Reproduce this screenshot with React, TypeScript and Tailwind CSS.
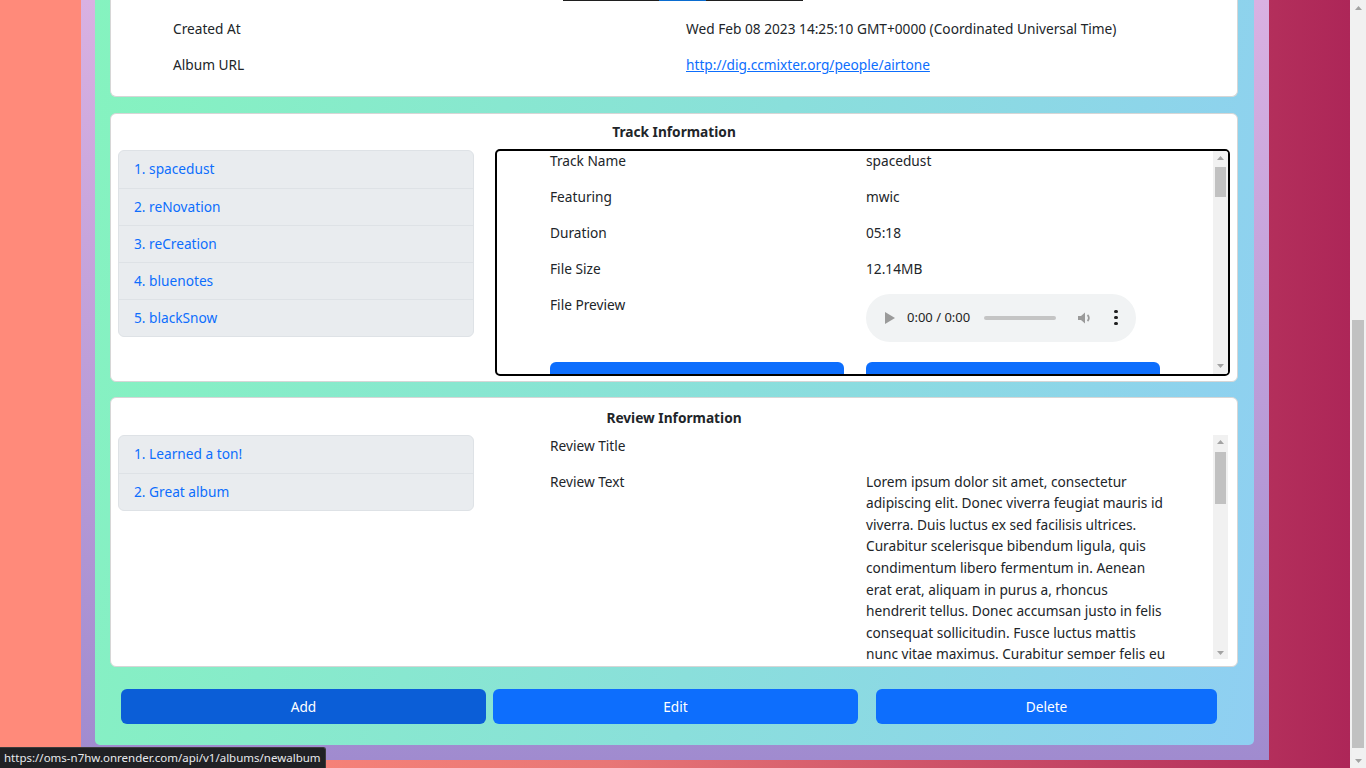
import React from "react";

const tracks = ["spacedust", "reNovation", "reCreation", "bluenotes", "blackSnow"];
const reviews = ["Learned a ton!", "Great album"];

const trackRows = [
  { label: "Track Name", value: "spacedust" },
  { label: "Featuring", value: "mwic" },
  { label: "Duration", value: "05:18" },
  { label: "File Size", value: "12.14MB" },
];

const lorem = [
  "Lorem ipsum dolor sit amet, consectetur",
  "adipiscing elit. Donec viverra feugiat mauris id",
  "viverra. Duis luctus ex sed facilisis ultrices.",
  "Curabitur scelerisque bibendum ligula, quis",
  "condimentum libero fermentum in. Aenean",
  "erat erat, aliquam in purus a, rhoncus",
  "hendrerit tellus. Donec accumsan justo in felis",
  "consequat sollicitudin. Fusce luctus mattis",
  "nunc vitae maximus. Curabitur semper felis eu",
];

function Arrow({ up }: { up?: boolean }) {
  return (
    <div className="flex h-[15px] w-full shrink-0 items-center justify-center">
      <svg width="7" height="4" viewBox="0 0 7 4">
        {up ? <path d="M0 4 L3.5 0 L7 4 Z" fill="#a3a3a3" /> : <path d="M0 0 L3.5 4 L7 0 Z" fill="#a3a3a3" />}
      </svg>
    </div>
  );
}

function Scrollbar({ thumbTop, thumbHeight }: { thumbTop: number; thumbHeight: number }) {
  return (
    <div className="flex h-full w-[15px] shrink-0 flex-col bg-[#f1f1f1]">
      <Arrow up />
      <div className="flex-1 px-[2px]">
        <div className="w-full bg-[#c1c1c1]" style={{ marginTop: thumbTop, height: thumbHeight }} />
      </div>
      <Arrow />
    </div>
  );
}

function ListGroup({ items }: { items: string[] }) {
  return (
    <div className="flex w-[356px] flex-col overflow-hidden rounded-[6px] border border-[#dee2e6] bg-[#e9ecef]">
      {items.map((t, i) => (
        <div
          key={t}
          className={
            "flex h-[37px] items-center px-[15px] text-[#0d6efd] " + (i > 0 ? "border-t border-[#dee2e6]" : "")
          }
        >
          {i + 1}. {t}
        </div>
      ))}
    </div>
  );
}

function AudioPlayer() {
  return (
    <div className="flex h-[48px] w-[270px] items-center whitespace-nowrap rounded-full bg-[#f1f3f4] pl-[17px] pr-[18px]">
      <svg width="14" height="16" viewBox="0 0 14 16">
        <path d="M2 2 L12 8 L2 14 Z" fill="#9a9a9a" />
      </svg>
      <span className="ml-[10px] text-[13px] text-[#1f1f1f]">0:00 / 0:00</span>
      <div className="ml-[14px] h-[4px] w-[72px] rounded-full bg-[#c4c4c4]" />
      <svg className="ml-[20px]" width="18" height="18" viewBox="0 0 18 18">
        <path d="M2 7 H5 L9 3.5 V14.5 L5 11 H2 Z" fill="#9a9a9a" />
        <path d="M11.5 6 A4 4 0 0 1 11.5 12" stroke="#9a9a9a" strokeWidth="1.8" fill="none" />
      </svg>
      <div className="ml-[20px] flex flex-col items-center gap-[2.5px]">
        <div className="h-[3.5px] w-[3.5px] rounded-full bg-[#1f1f1f]" />
        <div className="h-[3.5px] w-[3.5px] rounded-full bg-[#1f1f1f]" />
        <div className="h-[3.5px] w-[3.5px] rounded-full bg-[#1f1f1f]" />
      </div>
    </div>
  );
}

function TrackCard() {
  return (
    <div className="mt-[16px] flex h-[269px] flex-col rounded-[6px] border border-[#d6d6d6] bg-white px-[7px] pt-[7px]">
      <h2 className="text-center font-bold leading-[21.6px]">Track Information</h2>
      <div className="mt-[6px] flex gap-[21px]">
        <div className="mt-[1px]">
          <ListGroup items={tracks} />
        </div>
        <div className="flex h-[227px] w-[736px] overflow-hidden rounded-[5px] border-2 border-black">
          <div className="flex-1 overflow-hidden">
            <div className="mx-auto -mt-[1px] w-[610px]">
              {trackRows.map((r) => (
                <div key={r.label} className="grid h-[36px] grid-cols-[294px_294px] gap-x-[22px]">
                  <span>{r.label}</span>
                  <span>{r.value}</span>
                </div>
              ))}
              <div className="grid grid-cols-[294px_294px] gap-x-[22px]">
                <span>File Preview</span>
                <AudioPlayer />
              </div>
              <div className="mt-[20px] grid grid-cols-[294px_294px] gap-x-[22px]">
                <div className="h-[38px] rounded-[6px] bg-[#0d6efd]" />
                <div className="h-[38px] rounded-[6px] bg-[#0d6efd]" />
              </div>
            </div>
          </div>
          <Scrollbar thumbTop={1} thumbHeight={30} />
        </div>
      </div>
    </div>
  );
}

function ReviewCard() {
  return (
    <div className="mt-[15px] flex h-[270px] flex-col rounded-[6px] border border-[#d6d6d6] bg-white px-[7px] pt-[9px]">
      <h2 className="text-center font-bold leading-[21.6px]">Review Information</h2>
      <div className="mt-[4px] flex gap-[21px]">
        <div className="mt-[2px]">
          <ListGroup items={reviews} />
        </div>
        <div className="flex h-[228px] w-[736px] overflow-hidden border-2 border-transparent">
          <div className="flex-1 overflow-hidden">
            <div className="mx-auto w-[610px]">
              <div className="grid h-[36px] grid-cols-[294px_294px] gap-x-[22px]">
                <span>Review Title</span>
                <span />
              </div>
              <div className="grid grid-cols-[294px_294px] gap-x-[22px]">
                <span>Review Text</span>
                <div className="flex flex-col whitespace-nowrap">
                  {lorem.map((l) => (
                    <span key={l}>{l}</span>
                  ))}
                </div>
              </div>
            </div>
          </div>
          <div className="h-[226px]">
            <Scrollbar thumbTop={2} thumbHeight={52} />
          </div>
        </div>
      </div>
    </div>
  );
}

export default function App() {
  return (
    <div className="relative flex h-[768px] w-[1366px] overflow-hidden font-['Segoe_UI','Noto_Sans',sans-serif] text-[13.7px] leading-[21.6px] text-[#212529]">
      <div className="flex h-full w-[1350px] flex-col bg-[linear-gradient(to_right,#ff8a7a_8%,#e87676_45%,#ad2658_100%)]">
        <div className="mx-[81px] flex h-[760px] flex-col bg-[linear-gradient(to_bottom,#d9b1e2,#a08bcf)] pb-[15px] pl-[14px] pr-[15px]">
          <div className="flex flex-1 flex-col rounded-b-[5px] bg-[linear-gradient(100deg,#85f3bf_0%,#8adfdb_55%,#8fcff2_100%)] pl-[15px] pr-[16px]">
            <div className="flex h-[97px] flex-col rounded-b-[6px] border border-t-0 border-[#d6d6d6] bg-white">
              <div className="ml-[452px] flex h-[1px]">
                <div className="w-[96px] bg-[#1f1f1f]" />
                <div className="w-[47px] bg-[#0a6cd0]" />
                <div className="w-[97px] bg-[#1f1f1f]" />
              </div>
              <div className="mt-[17px] grid grid-cols-[513px_1fr] pl-[62px]">
                <span className="h-[36px]">Created At</span>
                <span>Wed Feb 08 2023 14:25:10 GMT+0000 (Coordinated Universal Time)</span>
                <span className="h-[36px]">Album URL</span>
                <span>
                  <a href="#" className="text-[#0d6efd] underline">
                    http://dig.ccmixter.org/people/airtone
                  </a>
                </span>
              </div>
            </div>
            <TrackCard />
            <ReviewCard />
            <div className="mt-[22px] flex text-white">
              <button className="ml-[11px] h-[35px] w-[365px] rounded-[6px] bg-[#0b5ed7]">Add</button>
              <button className="ml-[7px] h-[35px] w-[365px] rounded-[6px] bg-[#0d6efd]">Edit</button>
              <button className="ml-[18px] h-[35px] w-[341px] rounded-[6px] bg-[#0d6efd]">Delete</button>
            </div>
          </div>
        </div>
      </div>
      <div className="flex h-full w-[16px] flex-col bg-[#f1f1f1]">
        <Arrow up />
        <div className="flex-1 px-[2px]">
          <div className="mt-[305px] h-[428px] w-full bg-[#c1c1c1]" />
        </div>
        <Arrow />
      </div>
      <div className="absolute bottom-0 left-0 flex h-[21px] items-center rounded-tr-[3px] border-t border-r border-[#3c3c3c] bg-[#202124] px-[4px] text-[11.5px] text-[#e8eaed]">
        https://oms-n7hw.onrender.com/api/v1/albums/newalbum
      </div>
    </div>
  );
}
